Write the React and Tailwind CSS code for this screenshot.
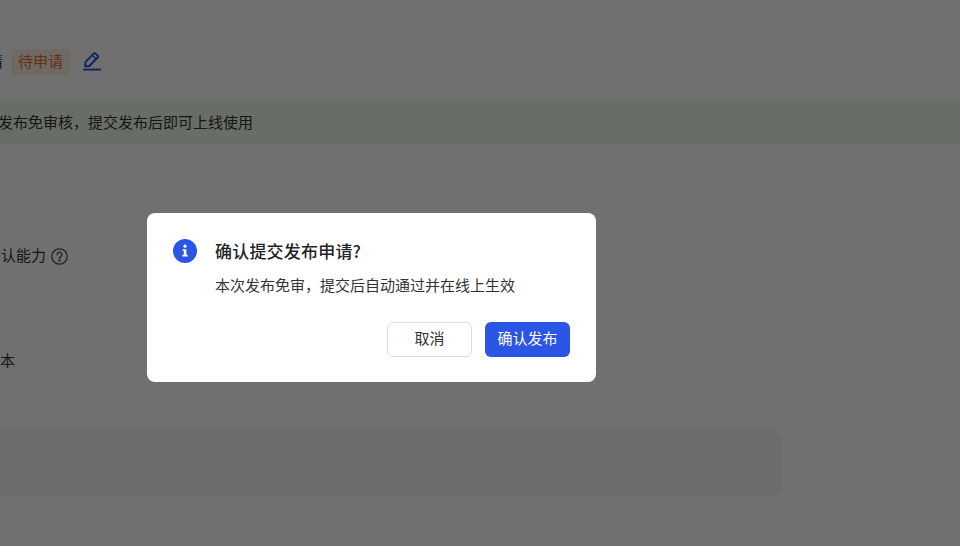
const FONT = "font-['Noto_Sans_CJK_SC','Noto_Sans',sans-serif]";

function PencilIcon() {
  return (
    <svg width="20" height="20" viewBox="0 0 20 20" fill="none" stroke="#2450e0" strokeWidth="1.9">
      <path d="M3.4 11.2 11.6 2.6a1.4 1.4 0 0 1 2 0l2 1.9a1.4 1.4 0 0 1 0 2L7.4 15 3.2 15.2z" strokeLinejoin="round" />
      <path d="M10.2 4.2l3.8 3.8" strokeWidth="1.4" />
      <path d="M1 18.6h18" />
    </svg>
  );
}

function HelpIcon() {
  return (
    <svg width="17" height="17" viewBox="0 0 16 16" fill="none" stroke="#555" strokeWidth="1.3">
      <circle cx="8" cy="8" r="7.2" />
      <path d="M5.8 6.3a2.2 2.2 0 1 1 3.4 1.8c-.8.5-1.2.9-1.2 1.8" strokeLinecap="round" />
      <circle cx="8" cy="11.8" r=".5" fill="#555" />
    </svg>
  );
}

function InfoIcon() {
  return (
    <span className="w-6 h-6 rounded-full bg-[#2a55e5] flex items-center justify-center shrink-0">
      <svg width="10" height="14" viewBox="0 0 10 14" fill="white">
        <circle cx="5" cy="2.2" r="1.6" />
        <path d="M2.6 5.2h3.8v5.6h1.2v1.6H2.4v-1.6h1.4V6.8H2.6z" />
      </svg>
    </span>
  );
}

export default function App() {
  return (
    <div className={`relative w-[960px] h-[546px] overflow-hidden bg-white text-[15px] text-[#333] ${FONT}`}>
      {/* page behind the mask, scrolled off to the left */}
      <div className="pt-[49px]">
        <div className="flex items-center h-[26px] -ml-[12px]">
          <span className="-mt-0.5">请</span>
          <span className="ml-2 h-[26px] px-[7px] pb-0.5 flex items-center rounded bg-[#fdeee3] text-[#d9742b]">待申请</span>
          <span className="ml-3 -mt-[3px] flex"><PencilIcon /></span>
        </div>
        <div className="mt-[26px] h-[43px] flex items-center -ml-[2px] pb-px bg-[#edf8e6] text-[#333]">
          发布免审核，提交发布后即可上线使用
        </div>
        <div className="mt-[100px] h-6 flex items-center">
          <span className="ml-px -mt-0.5">认能力</span>
          <span className="ml-[5px] flex"><HelpIcon /></span>
        </div>
        <div className="mt-[81px] h-6 flex items-center pb-0.5">本</div>
        <div className="mt-[57px] h-[67px] w-[782px] rounded-r-lg bg-[#f6f6f6]" />
      </div>

      {/* mask and dialog */}
      <div className="absolute inset-0 bg-black/[0.56] pl-[147px] pt-[213px]">
        <div className="w-[449px] h-[169px] rounded-lg bg-white pt-[26px] pl-[26px] pr-[26px]">
          <div className="flex items-center h-6">
            <InfoIcon />
            <h2 className="ml-[18px] text-[17px] tracking-[0.2px] font-medium text-[#1f2329]">确认提交发布申请?</h2>
          </div>
          <p className="mt-3 ml-[42px] leading-[20px] text-[#333]">本次发布免审，提交后自动通过并在线上生效</p>
          <div className="mt-[27px] flex justify-end gap-[13px]">
            <button className="w-[85px] h-[35px] pb-0.5 rounded-md border-[1.5px] border-[#dcdde0] bg-white text-[#333]">取消</button>
            <button className="w-[85px] h-[35px] pb-0.5 rounded-md bg-[#2a55e5] text-white">确认发布</button>
          </div>
        </div>
      </div>
    </div>
  );
}
